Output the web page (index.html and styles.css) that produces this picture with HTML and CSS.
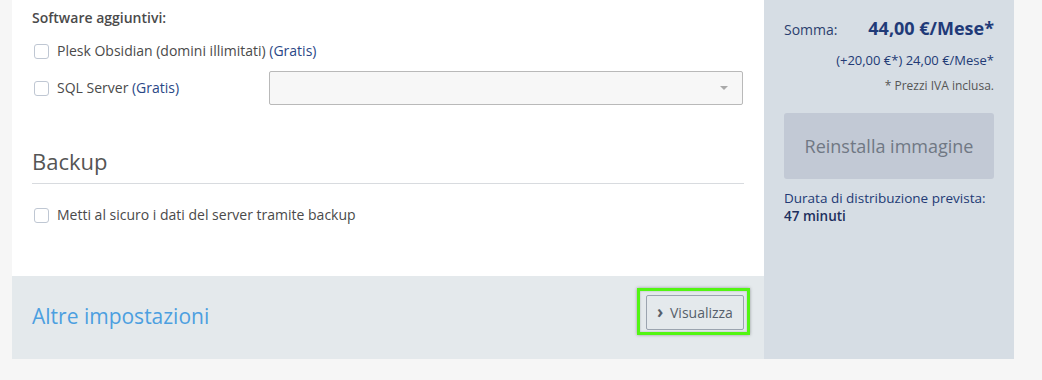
FILE: index.html
```html
<!DOCTYPE html>
<html lang="it">
<head>
  <meta charset="UTF-8" />
  <meta name="viewport" content="width=device-width, initial-scale=1.0"/>
  <title>Reinstalla immagine</title>
  <link rel="stylesheet" href="styles.css">
</head>
<body>

  <div class="layout">
    <div class="main">
      <div class="content">
        <p class="group-title">Software aggiuntivi:</p>

        <label class="check-row">
          <span class="check"><input type="checkbox"><span class="box"></span></span>
          <span>Plesk Obsidian (domini illimitati) <span class="free">(Gratis)</span></span>
        </label>

        <div class="check-row">
          <label class="check-label">
            <span class="check"><input type="checkbox"><span class="box"></span></span>
            <span>SQL Server <span class="free">(Gratis)</span></span>
          </label>
          <div class="select">
            <span class="caret"></span>
          </div>
        </div>

        <h2 class="section-title">Backup</h2>

        <label class="check-row backup-row">
          <span class="check"><input type="checkbox"><span class="box"></span></span>
          <span>Metti al sicuro i dati del server tramite backup</span>
        </label>
      </div>

      <div class="more">
        <h3>Altre impostazioni</h3>
        <button class="btn-view" type="button"><span class="chev">›</span> Visualizza</button>
      </div>
    </div>

    <aside class="sidebar">
      <div class="sum">
        <span>Somma:</span>
        <strong>44,00 €/Mese*</strong>
      </div>
      <p class="sum-detail">(+20,00 €*) 24,00 €/Mese*</p>
      <p class="vat">* Prezzi IVA inclusa.</p>

      <button class="btn-reinstall" type="button" disabled>Reinstalla immagine</button>

      <p class="duration">Durata di distribuzione prevista:<br><strong>47 minuti</strong></p>
    </aside>
  </div>

</body>
</html>
```

FILE: styles.css
```css
* { margin: 0; padding: 0; box-sizing: border-box; }
body {
  font-family: 'Open Sans', 'Noto Sans', sans-serif;
  background: #f6f6f6;
  color: #4a4a4a;
  font-size: 14px;
}

.layout {
  display: flex;
  width: 1002px;
  margin-left: 12px;
}

.main {
  width: 752px;
  background: #fff;
}

.content {
  padding: 8px 20px 44px;
}

.group-title {
  font-weight: 600;
  line-height: 20px;
  margin-bottom: 6px;
}

.check-row {
  display: flex;
  align-items: center;
  min-height: 34px;
  line-height: 20px;
  margin-bottom: 3px;
}

.check-label {
  display: flex;
  align-items: center;
  flex: 0 0 237px;
}

.check {
  display: inline-block;
  width: 15px;
  height: 15px;
  margin: 0 8px 0 2px;
}
.check input { display: none; }
.check .box {
  display: block;
  width: 15px;
  height: 15px;
  border: 1.5px solid #bfc7d3;
  border-radius: 3px;
  background: #fff;
}

.free { color: #2a4786; }

.select {
  position: relative;
  width: 474px;
  height: 34px;
  background: #f7f7f7;
  border: 1px solid #b9b9b9;
  border-radius: 2px;
}
.caret {
  position: absolute;
  right: 14px;
  top: 14px;
  border-left: 4px solid transparent;
  border-right: 4px solid transparent;
  border-top: 4px solid #a9a9a9;
}

.section-title {
  font-size: 22px;
  font-weight: 400;
  line-height: 30px;
  color: #555;
  margin-top: 41px;
  padding-bottom: 7px;
  border-bottom: 1px solid #d8dbdf;
}

.backup-row { margin-top: 14px; margin-bottom: 0; }

.more {
  height: 83px;
  background: #e4e9ec;
  display: flex;
  align-items: flex-start;
  justify-content: space-between;
  padding: 19px 20px 0;
}
.more h3 {
  font-size: 21px;
  font-weight: 400;
  line-height: 30px;
  color: #4c9fe0;
  margin-top: 6px;
}

.btn-view {
  position: relative;
  height: 35px;
  width: 98px;
  font-family: inherit;
  font-size: 14px;
  color: #565f6b;
  background: #e4e9ec;
  border: 1px solid #9ba4af;
  border-radius: 2px;
}
.btn-view .chev {
  font-weight: 700;
  font-size: 17px;
  line-height: 14px;
  margin-right: 3px;
}
/* highlight ring */
.btn-view::after {
  content: '';
  position: absolute;
  top: -8px; left: -10px; right: -7px; bottom: -6px;
  border: 3px solid #52f512;
  box-shadow: 0 0 3px rgba(0,0,0,0.35), inset 0 0 2px rgba(0,0,0,0.25);
}

.sidebar {
  width: 250px;
  height: 359px;
  background: #d6dde4;
  padding: 16px 20px 0;
  color: #223a75;
}

.sum {
  display: flex;
  justify-content: space-between;
  align-items: baseline;
  line-height: 24px;
}
.sum span { font-size: 14px; color: #2c3f6e; }
.sum strong { font-size: 18px; font-weight: 700; color: #1f3a78; }

.sum-detail {
  text-align: right;
  font-size: 13px;
  line-height: 18px;
  margin-top: 9px;
}

.vat {
  text-align: right;
  font-size: 12px;
  line-height: 18px;
  color: #555;
  margin-top: 8px;
}

.btn-reinstall {
  display: block;
  width: 100%;
  height: 66px;
  margin-top: 18px;
  background: #c2c9d5;
  border: none;
  border-radius: 3px;
  font-family: inherit;
  font-size: 18px;
  color: #707884;
}

.duration {
  font-size: 13.5px;
  line-height: 17.5px;
  margin-top: 11px;
}
.duration strong { font-weight: 600; color: #1d2f5e; }
```
